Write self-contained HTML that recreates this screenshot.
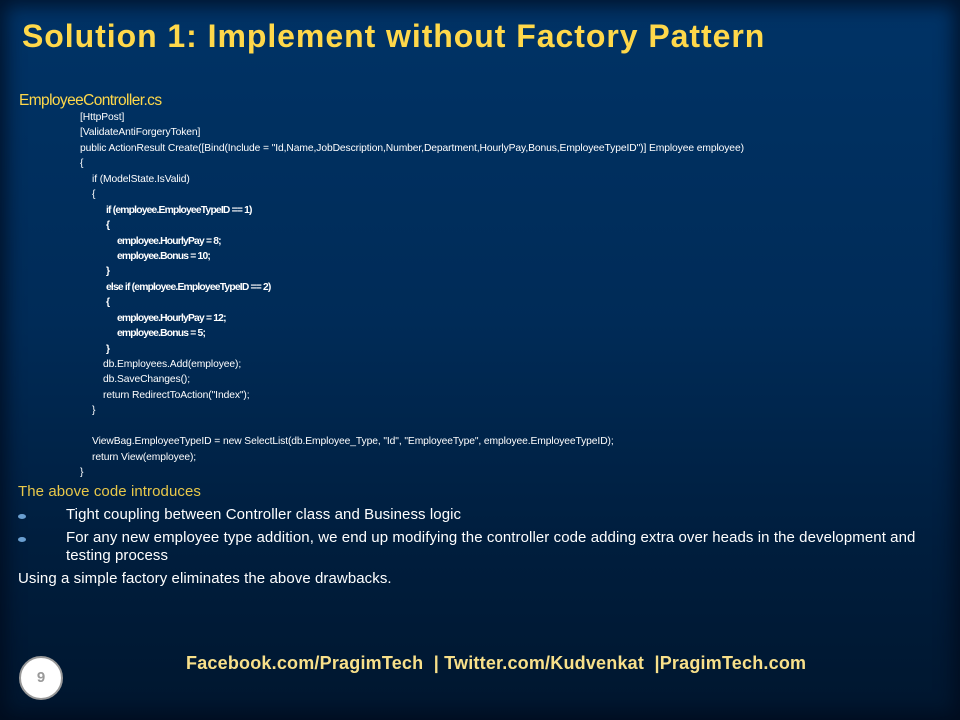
<!DOCTYPE html>
<html><head><meta charset="utf-8"><style>
html,body{margin:0;padding:0}
body{width:960px;height:720px;position:relative;overflow:hidden;font-family:"Liberation Sans",sans-serif;
background:linear-gradient(180deg,#003366 0%,#002b57 45%,#001e3e 75%,#00162e 100%);}
.vig{position:absolute;inset:0;box-shadow:inset 0 0 18px 6px rgba(0,10,25,.75);}
.title{position:absolute;left:22px;top:18px;font-size:32px;font-weight:bold;color:#ffd84a;letter-spacing:0.95px;white-space:nowrap}
.file{position:absolute;left:19px;top:92px;font-size:15.5px;color:#ffd84a;letter-spacing:-0.6px}
.code{position:absolute;left:80px;top:110px;font-size:10.3px;color:#fff;line-height:15.45px;white-space:nowrap;letter-spacing:-0.1px}
.code div{height:15.45px}
.code b{letter-spacing:-0.8px}
.t{position:absolute;font-size:15px;color:#fff;white-space:nowrap;letter-spacing:0.08px}
.dot{position:absolute;width:8px;height:5px;border-radius:50%;background:#6a9fd0}
.foot{position:absolute;left:186px;top:653px;font-size:18px;font-weight:bold;color:#f8e08a;white-space:pre;letter-spacing:0.2px}
.circ{position:absolute;left:19px;top:656px;width:40px;height:40px;border-radius:50%;background:#fff;border:2px solid #999;text-align:center;line-height:40px;font-weight:bold;color:#999;font-size:15px}
</style></head><body>
<div class="vig"></div>
<div class="title">Solution 1: Implement without Factory Pattern</div>
<div class="file">EmployeeController.cs</div>
<div class="code">
<div>[HttpPost]</div>
<div>[ValidateAntiForgeryToken]</div>
<div>public ActionResult Create([Bind(Include = "Id,Name,JobDescription,Number,Department,HourlyPay,Bonus,EmployeeTypeID")] Employee employee)</div>
<div>{</div>
<div style="padding-left:12px">if (ModelState.IsValid)</div>
<div style="padding-left:12px">{</div>
<div style="padding-left:26px"><b>if (employee.EmployeeTypeID == 1)</b></div>
<div style="padding-left:26px"><b>{</b></div>
<div style="padding-left:37px"><b>employee.HourlyPay = 8;</b></div>
<div style="padding-left:37px"><b>employee.Bonus = 10;</b></div>
<div style="padding-left:26px"><b>}</b></div>
<div style="padding-left:26px"><b>else if (employee.EmployeeTypeID == 2)</b></div>
<div style="padding-left:26px"><b>{</b></div>
<div style="padding-left:37px"><b>employee.HourlyPay = 12;</b></div>
<div style="padding-left:37px"><b>employee.Bonus = 5;</b></div>
<div style="padding-left:26px"><b>}</b></div>
<div style="padding-left:23px">db.Employees.Add(employee);</div>
<div style="padding-left:23px">db.SaveChanges();</div>
<div style="padding-left:23px">return RedirectToAction("Index");</div>
<div style="padding-left:12px">}</div>
<div></div>
<div style="padding-left:12px">ViewBag.EmployeeTypeID = new SelectList(db.Employee_Type, "Id", "EmployeeType", employee.EmployeeTypeID);</div>
<div style="padding-left:12px">return View(employee);</div>
<div>}</div>
</div>
<div class="t" style="left:18px;top:483px;color:#e8c84a">The above code introduces</div>
<div class="dot" style="left:18px;top:514px"></div>
<div class="t" style="left:66px;top:506px">Tight coupling between Controller class and Business logic</div>
<div class="dot" style="left:18px;top:537px"></div>
<div class="t" style="left:66px;top:529px">For any new employee type addition, we end up modifying the controller code adding extra over heads in the development and</div>
<div class="t" style="left:66px;top:547px">testing process</div>
<div class="t" style="left:18px;top:570px">Using a simple factory eliminates the above drawbacks.</div>
<div class="foot">Facebook.com/PragimTech  | Twitter.com/Kudvenkat  |PragimTech.com</div>
<div class="circ">9</div>
</body></html>
